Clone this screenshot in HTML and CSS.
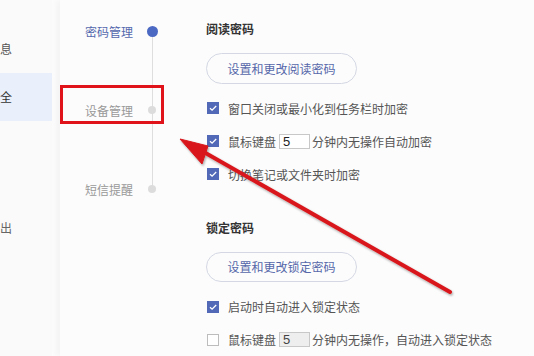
FILE: index.html
```html
<!DOCTYPE html>
<html lang="zh-CN">
<head>
<meta charset="utf-8">
<link rel="stylesheet" href="styles.css">
</head>
<body>
<div class="app">
  <aside class="side">
    <div class="side-item">信息</div>
    <div class="side-item selected">安全</div>
    <div class="side-item exit">退出</div>
  </aside>
  <main class="panel">
    <nav class="steps">
      <div class="step active first">
        <span class="step-label">密码管理</span>
        <span class="track"><span class="dot"></span></span>
      </div>
      <div class="step">
        <span class="step-label">设备管理</span>
        <span class="track"><span class="dot"></span></span>
      </div>
      <div class="step last">
        <span class="step-label">短信提醒</span>
        <span class="track"><span class="dot"></span></span>
      </div>
    </nav>
    <section class="content">
      <h2 class="title">阅读密码</h2>
      <button class="pill">设置和更改阅读密码</button>
      <div class="opts">
        <label class="opt"><span class="cb on"><svg viewBox="0 0 12 12"><path d="M3 6.2 5.1 8.2 9.2 4" fill="none" stroke="#fff" stroke-width="1.3"/></svg></span>窗口关闭或最小化到任务栏时加密</label>
        <label class="opt"><span class="cb on"><svg viewBox="0 0 12 12"><path d="M3 6.2 5.1 8.2 9.2 4" fill="none" stroke="#fff" stroke-width="1.3"/></svg></span>鼠标键盘<span class="num">5</span>分钟内无操作自动加密</label>
        <label class="opt"><span class="cb on"><svg viewBox="0 0 12 12"><path d="M3 6.2 5.1 8.2 9.2 4" fill="none" stroke="#fff" stroke-width="1.3"/></svg></span>切换笔记或文件夹时加密</label>
      </div>
      <h2 class="title second">锁定密码</h2>
      <button class="pill">设置和更改锁定密码</button>
      <div class="opts">
        <label class="opt"><span class="cb on"><svg viewBox="0 0 12 12"><path d="M3 6.2 5.1 8.2 9.2 4" fill="none" stroke="#fff" stroke-width="1.3"/></svg></span>启动时自动进入锁定状态</label>
        <label class="opt"><span class="cb"></span>鼠标键盘<span class="num off">5</span>分钟内无操作，自动进入锁定状态</label>
      </div>
    </section>
  </main>
  <div class="highlight"></div>
  <svg class="arrow" viewBox="0 0 534 356" width="534" height="356">
    <defs>
      <filter id="sh" x="-10%" y="-10%" width="120%" height="120%">
        <feDropShadow dx="1" dy="1.5" stdDeviation="1.2" flood-color="#000" flood-opacity="0.35"/>
      </filter>
    </defs>
    <g filter="url(#sh)" fill="#d8171b" stroke="#d8171b">
      <line x1="202" y1="151" x2="450" y2="292" stroke-width="4" stroke-linecap="round"/>
      <polygon points="180,139 208,146 202,164" stroke-width="1" stroke-linejoin="round"/>
    </g>
  </svg>
</div>
</body>
</html>
```
FILE: styles.css
```css
* { box-sizing: border-box; }
html, body { margin: 0; padding: 0; }
body {
  width: 534px;
  height: 356px;
  overflow: hidden;
  background: #fcfcfc;
  font-family: "Noto Sans CJK SC", "Noto Sans", sans-serif;
  font-size: 12px;
}
.app {
  position: relative;
  display: flex;
  width: 534px;
  height: 356px;
}
.side {
  width: 52px;
  flex: none;
  background: #fafafa;
  padding-top: 25px;
  display: flex;
  flex-direction: column;
  overflow: hidden;
}
.side-item {
  height: 48px;
  line-height: 48px;
  margin-left: -12px;
  color: #555;
  font-size: 12px;
  white-space: nowrap;
}
.side-item.selected {
  margin-left: 0;
  text-indent: -12px;
  background: #e9f0fb;
  color: #333;
}
.side-item.exit {
  margin-top: 83px;
  color: #666;
}
.panel {
  flex: 1;
  display: flex;
  margin-left: 8px;
  background: #fcfcfc;
  box-shadow: -4px 0 6px rgba(0,0,0,0.035);
}
.steps {
  width: 146px;
  flex: none;
  padding-top: 21px;
  padding-left: 25px;
  display: flex;
  flex-direction: column;
  gap: 59px;
  background: linear-gradient(#dedede, #dedede) no-repeat 92px 31px / 1px 158px;
}
.step {
  display: flex;
  align-items: center;
  height: 20px;
  color: #999;
  font-size: 12px;
}
.step.active { color: #5468ad; }
.step-label { width: 57px; }
.track {
  width: 20px;
  height: 20px;
  display: flex;
  align-items: center;
  justify-content: center;
}
.dot {
  width: 8px;
  height: 8px;
  border-radius: 50%;
  background: #dcdcdc;
}
.step.active .dot {
  width: 11px;
  height: 11px;
  background: #4b69c3;
}
.content {
  flex: 1;
  padding-top: 19px;
  display: flex;
  flex-direction: column;
  align-items: flex-start;
}
.title {
  margin: 0;
  height: 20px;
  line-height: 20px;
  font-size: 12px;
  font-weight: bold;
  color: #333;
}
.title.second { margin-top: 27px; }
.pill {
  margin-top: 14px;
  width: 151px;
  height: 31px;
  border: 1px solid #d5d8e4;
  border-radius: 16px;
  background: #fcfcfc;
  color: #5668aa;
  font-family: inherit;
  font-size: 12px;
  padding: 0;
}
.opts {
  margin-top: 8px;
  display: flex;
  flex-direction: column;
}
.opt {
  height: 33px;
  display: flex;
  align-items: center;
  padding-left: 1px;
  color: #555;
  font-size: 12px;
  white-space: nowrap;
}
.cb {
  width: 12px;
  height: 12px;
  margin-right: 9px;
  border: 1px solid #bdbdbd;
  background: #fff;
  display: inline-flex;
}
.cb.on {
  border: none;
  background: #5169b7;
}
.cb svg { width: 12px; height: 12px; }
.num {
  width: 31px;
  height: 15px;
  margin: 0 2px 0 3px;
  border: 1px solid #c8c8c8;
  background: #fff;
  color: #222;
  font-family: "Liberation Sans", sans-serif;
  font-size: 13px;
  line-height: 13px;
  padding-left: 3px;
}
.num.off { background: #eeeeee; color: #444; }
.highlight {
  position: absolute;
  left: 60px;
  top: 85px;
  width: 104px;
  height: 39px;
  border: 3px solid #e0131a;
}
.arrow {
  position: absolute;
  left: 0;
  top: 0;
  pointer-events: none;
}
```
